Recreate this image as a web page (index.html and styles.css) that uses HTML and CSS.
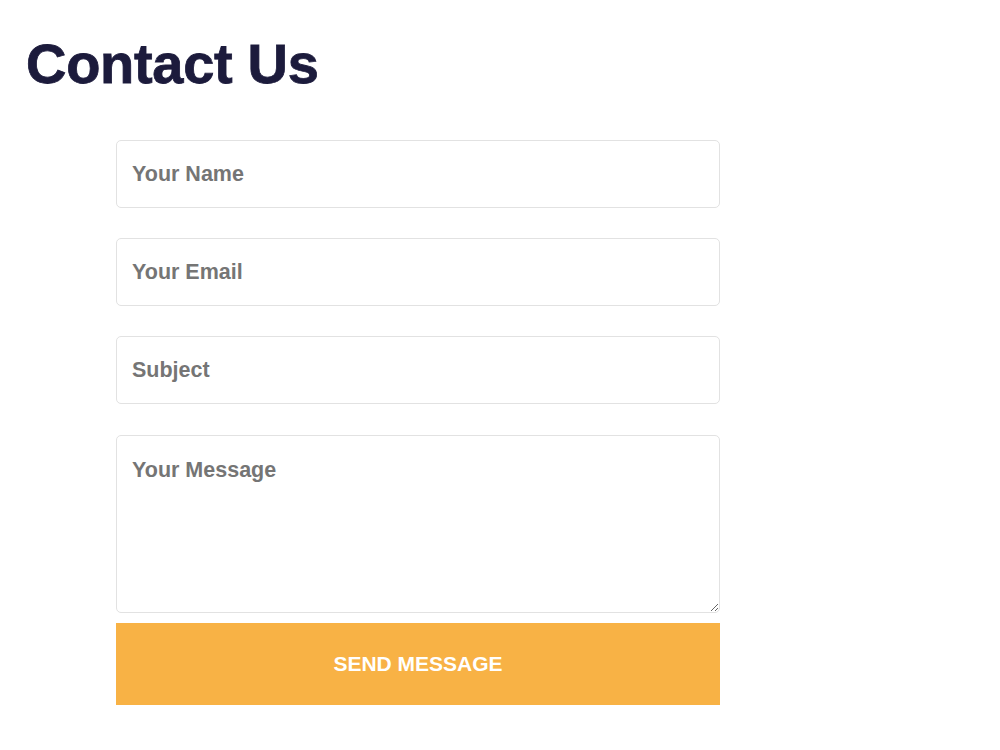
FILE: index.html
```html
<!DOCTYPE html>
<html lang="en">
<head>
    <meta charset="UTF-8">
    <title>Contact Us</title>
    <link rel="stylesheet" href="styles.css">
</head>
<body>

<div id="wrapper">
    <h1>Contact Us</h1>

    <form class="contact-form">
        <input type="text" class="feld" placeholder="Your Name">
        <input type="email" class="feld" placeholder="Your Email">
        <input type="text" class="feld" placeholder="Subject">
        <textarea class="feld nachricht" placeholder="Your Message"></textarea>
        <button type="button" class="senden">SEND MESSAGE</button>
    </form>
</div>

</body>
</html>
```

FILE: styles.css
```css
html, body {
    margin: 0;
    padding: 0;
    background: white;
    font-family: 'Liberation Sans', Arial, sans-serif;
}

#wrapper {
    padding: 24px 26px;
}

h1 {
    margin: 0;
    font-size: 56px;
    font-weight: bold;
    color: #1c1b3c;
    letter-spacing: -0.3px;
    line-height: 80px;
    -webkit-text-stroke: 0.8px #1c1b3c;
}

.contact-form {
    display: flex;
    flex-direction: column;
    width: 604px;
    margin: 36px 0 0 90px;
}

.feld {
    box-sizing: border-box;
    height: 68px;
    margin-bottom: 30px;
    padding: 0 15px;
    border: 1px solid #e2e2e2;
    border-radius: 5px;
    font-family: inherit;
    font-size: 21.5px;
    font-weight: bold;
    color: #555;
    outline: none;
}

.feld::placeholder {
    color: #757575;
    opacity: 1;
}

.nachricht {
    height: 178px;
    margin-top: 1px;
    margin-bottom: 10px;
    padding-top: 22px;
    resize: vertical;
}

.senden {
    height: 82px;
    border: none;
    background-color: #f8b245;
    color: white;
    font-family: inherit;
    font-size: 21px;
    font-weight: bold;
    cursor: pointer;
}
```
